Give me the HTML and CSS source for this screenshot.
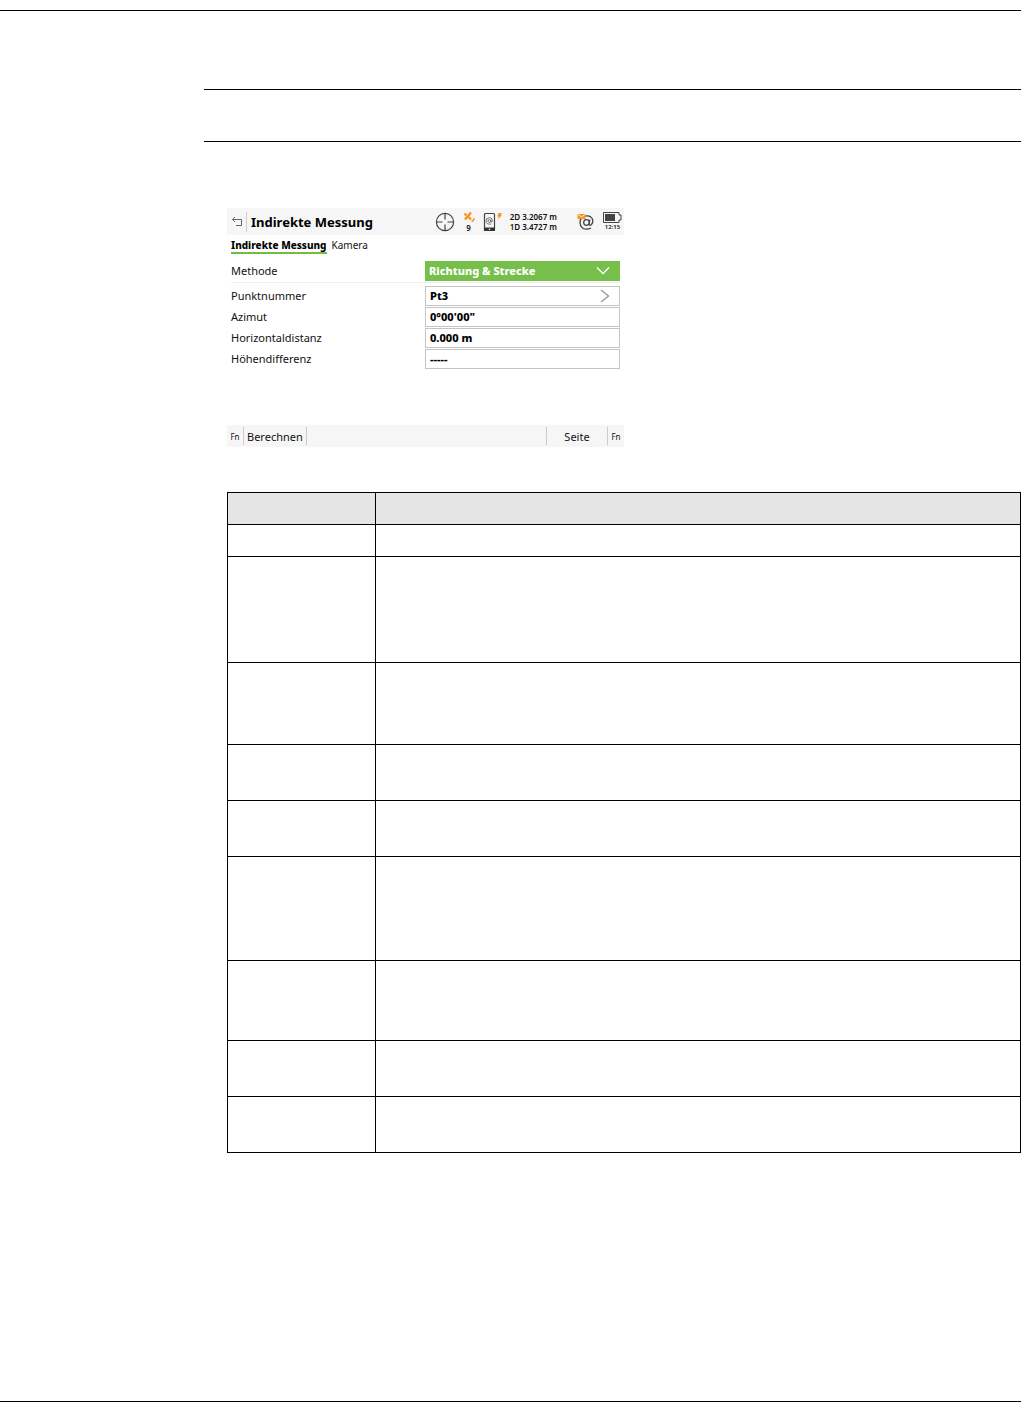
FILE: index.html
```html
<!DOCTYPE html>
<html lang="de">
<head>
    <meta charset="UTF-8">
    <meta name="viewport" content="width=device-width, initial-scale=1.0">
    <title>Indirekte Messung</title>
    <link rel="stylesheet" href="styles.css">
</head>
<body>
    <main class="page">
        <div class="heading"></div>
        <div class="content">
            <form class="device">
                <header class="topbar">
                    <button type="button" class="back" aria-label="Zurück">
                        <svg width="12" height="12" viewBox="0 0 12 12" fill="none" stroke="#666">
                            <path d="M4 1L1.5 3.5L4 6M1.5 3.5H10.5V9.5H5"/>
                        </svg>
                    </button>
                    <h1>Indirekte Messung</h1>
                    <div class="status">
                        <svg class="target" width="20" height="20" viewBox="0 0 20 20" fill="none" stroke="#444" stroke-width="1.2">
                            <circle cx="10" cy="10" r="8.6"/>
                            <path d="M10 1V7.5M10 12.5V19M1 10H7.5M12.5 10H19"/>
                        </svg>
                        <div class="satellite">
                            <svg width="12" height="12" viewBox="0 0 12 12" fill="none" stroke="#f7931e">
                                <path d="M1.5 2.5L3.5 4.5M5.5 6L8 8.5" stroke-width="2.4"/>
                                <path d="M2 8.5L8 1.5" stroke-width="2.4"/>
                                <path d="M8.5 10.5Q11 10 11 7" stroke-width="1.4"/>
                            </svg>
                            <span>9</span>
                        </div>
                        <svg class="phone" width="19" height="20" viewBox="0 0 19 20" fill="none">
                            <rect x="1.5" y="1.5" width="10" height="17" rx="1" stroke="#444" stroke-width="1.2"/>
                            <path d="M1 15.5H12V19H1Z" fill="#333"/>
                            <circle cx="6.5" cy="17.2" r="0.8" fill="#fff"/>
                            <circle cx="6.3" cy="9" r="1.4" stroke="#555" stroke-width="0.8"/>
                            <path d="M7.8 7.5V9.5Q8 10.6 9 10Q10.2 6 6.5 5.6Q3 5.8 3 9.2Q3.3 12.8 8 12" stroke="#555" stroke-width="0.8"/>
                            <path d="M15.5 1H19L17.8 3H19L14.8 7.5L15.8 4.6H14.4Z" fill="#f7931e"/>
                        </svg>
                        <div class="residuals">
                            <span>2D 3.2067 m</span>
                            <span>1D 3.4727 m</span>
                        </div>
                        <svg class="mail" width="18" height="18" viewBox="0 0 18 18" fill="none">
                            <circle cx="9.5" cy="9.5" r="2.8" stroke="#444" stroke-width="1.3"/>
                            <path d="M12.8 6.5L12.2 11Q12.5 13 14.3 11.8Q16.2 10 15.8 7Q14.5 2.5 9.5 2.8Q3.2 3.5 3 9.5Q3.5 16 9.5 16.2Q12 16.2 14 15" stroke="#444" stroke-width="1.3"/>
                            <path d="M0.5 1H8.5V6H0.5Z" fill="#f7931e"/>
                            <path d="M1 1.5L4.5 4L8 1.5" stroke="#fff" stroke-width="0.8"/>
                        </svg>
                        <div class="battery">
                            <svg width="19" height="11" viewBox="0 0 19 11" fill="none">
                                <path d="M0.5 0.5H16V3H18V8H16V10.5H0.5Z" stroke="#444"/>
                                <path d="M2 2H12V9H2Z" fill="#444"/>
                            </svg>
                            <span>12:15</span>
                        </div>
                    </div>
                </header>
                <nav class="tabs">
                    <a href="#" class="active">Indirekte Messung</a>
                    <a href="#">Kamera</a>
                </nav>
                <div class="row method">
                    <label for="methode">Methode</label>
                    <div class="field">
                        <select id="methode">
                            <option>Richtung &amp; Strecke</option>
                        </select>
                        <svg class="arrow" width="14" height="10" viewBox="0 0 14 10" fill="none" stroke="#fff" stroke-width="1.5">
                            <path d="M1 1.5L7 7.5L13 1.5"/>
                        </svg>
                    </div>
                </div>
                <div class="rows">
                    <div class="row">
                        <label for="punkt">Punktnummer</label>
                        <div class="field">
                            <input type="text" id="punkt" value="Pt3">
                            <svg class="arrow" width="14" height="14" viewBox="0 0 14 14" fill="none" stroke="#999" stroke-width="1.4">
                                <path d="M5 1L12.5 7L5 13"/>
                            </svg>
                        </div>
                    </div>
                    <div class="row">
                        <label for="azimut">Azimut</label>
                        <div class="field"><input type="text" id="azimut" value="0°00'00&quot;"></div>
                    </div>
                    <div class="row">
                        <label for="distanz">Horizontaldistanz</label>
                        <div class="field"><input type="text" id="distanz" value="0.000 m"></div>
                    </div>
                    <div class="row">
                        <label for="hoehe">Höhendifferenz</label>
                        <div class="field"><input type="text" id="hoehe" value="-----"></div>
                    </div>
                </div>
                <footer class="keys">
                    <button type="button" class="fn">Fn</button>
                    <button type="button" class="key">Berechnen</button>
                    <button type="button" class="key page-key">Seite</button>
                    <button type="button" class="fn">Fn</button>
                </footer>
            </form>
            <table class="fields">
                <thead>
                    <tr class="line-1"><th class="name"></th><th></th></tr>
                </thead>
                <tbody>
                    <tr class="line-1"><td></td><td></td></tr>
                    <tr class="line-4 spaced"><td></td><td></td></tr>
                    <tr class="line-3 spaced"><td></td><td></td></tr>
                    <tr class="line-2"><td></td><td></td></tr>
                    <tr class="line-2"><td></td><td></td></tr>
                    <tr class="line-4"><td></td><td></td></tr>
                    <tr class="line-3"><td></td><td></td></tr>
                    <tr class="line-2"><td></td><td></td></tr>
                    <tr class="line-2"><td></td><td></td></tr>
                </tbody>
            </table>
        </div>
    </main>
</body>
</html>
```
FILE: styles.css
```css
*{
    box-sizing: border-box;
}
body{
    margin: 0;
    background-color: #fff;
    color: #111;
    font-family: "Noto Sans", sans-serif;
    font-size: 11px;
}
.page{
    display: flex;
    flex-direction: column;
    min-height: calc(100vh - 10px);
    margin-top: 10px;
    padding: 78px 0 0 204px;
    border-top: 1px solid #000;
    border-bottom: 1px solid #000;
}
.heading{
    height: 53px;
    border-top: 1px solid #000;
    border-bottom: 1px solid #000;
}
.content{
    padding: 66px 0 48px 23px;
}
button{
    padding: 0;
    border: 0;
    background: none;
    color: inherit;
    font: inherit;
}
svg{
    display: block;
}

/* device screen */
.device{
    width: 50%;
    margin-bottom: 45px;
}
.topbar{
    display: flex;
    align-items: center;
    height: 27px;
    background-color: #f6f6f6;
}
.back{
    display: flex;
    justify-content: center;
    align-items: center;
    width: 20px;
    height: 20px;
    border-right: 1px solid #ccc;
}
h1{
    margin: 0 0 0 4px;
    color: #000;
    font-size: 13px;
    line-height: 20px;
    white-space: nowrap;
}
.status{
    display: flex;
    align-items: center;
    margin-left: auto;
    padding-right: 2px;
    font-size: 8px;
    font-weight: 600;
    line-height: 10px;
}
.satellite, .battery{
    display: flex;
    flex-direction: column;
    align-items: center;
}
.satellite{
    margin: 0 8px;
}
.residuals{
    display: flex;
    flex-direction: column;
    margin: 0 20px 0 8px;
    white-space: nowrap;
}
.battery{
    margin-left: 8px;
    font-size: 6px;
    line-height: 8px;
}
.tabs{
    display: flex;
    gap: 5px;
    padding: 3px 4px 0;
    font-size: 10px;
}
.tabs a{
    color: #111;
    line-height: 14px;
    text-decoration: none;
}
.tabs .active{
    border-bottom: 2px solid #6fbe44;
    color: #000;
    font-weight: 800;
}
.row{
    display: flex;
    align-items: center;
    margin: 0 4px;
}
.row label{
    width: 194px;
    line-height: 20px;
}
.method{
    margin-top: 7px;
    padding-bottom: 1px;
    border-bottom: 1px solid #eee;
}
.rows{
    display: flex;
    flex-direction: column;
    gap: 1px;
    padding-top: 3px;
}
.field{
    position: relative;
    flex: 1;
}
.field input, .field select{
    display: block;
    width: 100%;
    height: 20px;
    margin: 0;
    padding: 0 4px 2px;
    border: 1px solid #c4c4c4;
    border-radius: 0;
    background-color: #fff;
    color: #000;
    font: 800 11px "Noto Sans", sans-serif;
}
.field select{
    padding: 0 3px 2px;
    border-color: #76bf4b;
    background-color: #76bf4b;
    color: #fff;
    appearance: none;
}
.arrow{
    position: absolute;
    top: 50%;
    right: 10px;
    transform: translateY(-50%);
    pointer-events: none;
}
.keys{
    display: flex;
    align-items: center;
    height: 22px;
    margin-top: 56px;
    background-color: #f6f6f6;
}
.keys button{
    height: 18px;
    line-height: 20px;
}
.keys .fn{
    width: 16px;
    font-size: 8px;
}
.keys .key{
    padding: 0 3px;
    border-left: 1px solid #ccc;
    border-right: 1px solid #ccc;
}
.keys .page-key{
    width: 62px;
    margin-left: auto;
}

/* field description table */
.fields{
    width: 100%;
    border-collapse: collapse;
    table-layout: fixed;
}
.fields th, .fields td{
    padding: 0;
    border: 1px solid #000;
}
.fields th{
    background-color: #e5e5e5;
}
.fields .name{
    width: 148px;
}
.line-1{
    height: 32px;
}
.line-2{
    height: 56px;
}
.line-3{
    height: 80px;
}
.line-4{
    height: 104px;
}
.line-3.spaced{
    height: 82px;
}
.line-4.spaced{
    height: 106px;
}
```
